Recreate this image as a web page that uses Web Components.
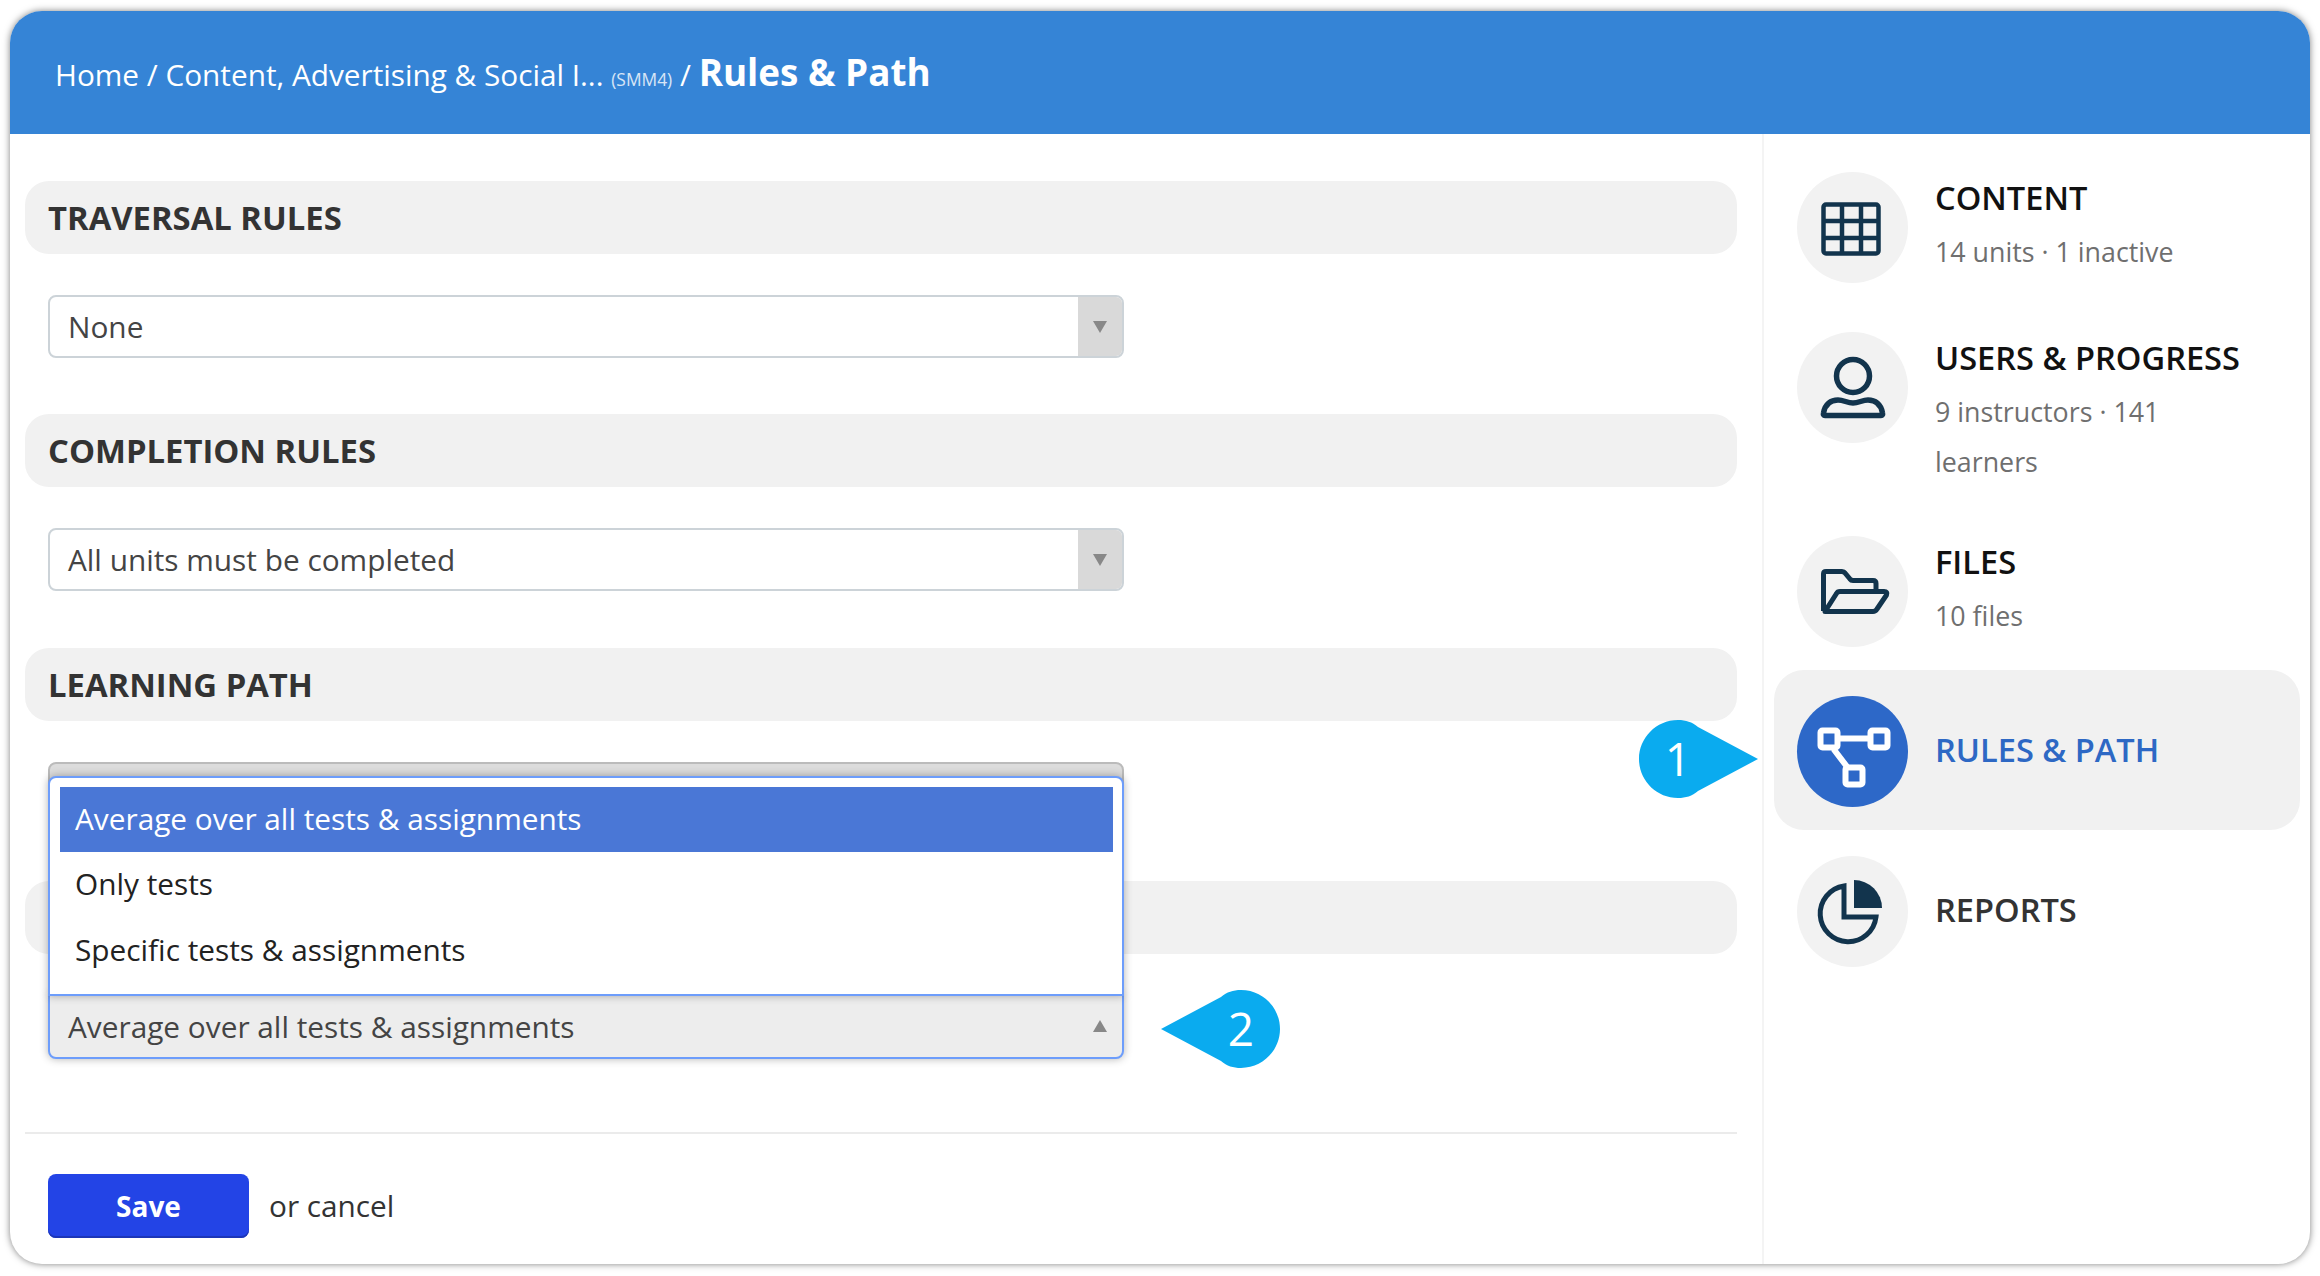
<!DOCTYPE html>
<html lang="en"><head><meta charset="utf-8"><title>Rules &amp; Path</title>
<style>
html,body{margin:0;padding:0;background:#fff;font-family:"Open Sans","Liberation Sans",sans-serif;color:#333}
</style></head><body>
<app-card>
  <app-header slot="header"><span>Home / Content, Advertising &amp; Social I...</span> <small>(SMM4)</small> <span>/</span> <b>Rules &amp; Path</b></app-header>
  <div slot="main">
    <form-section heading="Traversal rules"><select-box value="None"></select-box></form-section>
    <form-section heading="Completion rules"><select-box value="All units must be completed"></select-box></form-section>
    <form-section heading="Learning path"><select-box muted></select-box></form-section>
    <form-section last>
      <select-box open value="Average over all tests &amp; assignments">
        <option-row selected>Average over all tests &amp; assignments</option-row>
        <option-row>Only tests</option-row>
        <option-row>Specific tests &amp; assignments</option-row>
      </select-box>
      <call-out side="left" num="2"></call-out>
    </form-section>
    <form-actions></form-actions>
  </div>
  <div slot="side">
    <nav-item heading="Content" sub="14 units · 1 inactive">
      <svg viewBox="0 0 111 111" fill="none" stroke="currentColor" stroke-width="4.500"><rect x="26.500" y="32.500" width="55" height="49" rx="2.500"/><path d="M45 32v50M64 32v50M26 49h56M26 66h56"/></svg>
    </nav-item>
    <nav-item heading="Users &amp; Progress" sub="9 instructors · 141 learners">
      <svg viewBox="0 0 111 111" fill="none" stroke="currentColor" stroke-width="5.500"><circle cx="56" cy="44" r="16.500"/><path stroke-linejoin="round" d="M28 83.500H84Q86 83.500 85.500 81C84 72 78 68 71 68C65 68 62 71 56 71C50 71 47 68 41 68C34 68 28 72 26.500 81Q26 83.500 28 83.500Z"/></svg>
    </nav-item>
    <nav-item heading="Files" sub="10 files">
      <svg viewBox="0 0 111 111" fill="none" stroke="currentColor" stroke-width="5" stroke-linejoin="round"><path d="M26.500 75V38Q26.500 35.500 29 35.500H45Q47 35.500 48 37L53 43Q54 44.500 56 44.500H76Q79 44.500 79 47.500V54"/><path d="M28 75.500L39.500 57.500Q40.500 55.500 43 55.500H87Q91 55.500 89.500 59L80 73Q78.500 75.500 76 75.500Z"/></svg>
    </nav-item>
    <nav-item active heading="Rules &amp; Path">
      <svg viewBox="0 0 111 111" fill="none" stroke="currentColor" stroke-width="6"><rect x="23.500" y="34.500" width="17" height="17" rx="2"/><rect x="73.500" y="34.500" width="17" height="17" rx="2"/><rect x="48.500" y="71.500" width="17" height="17" rx="2"/><path d="M41 42.500H73M36.500 53L51 72"/></svg>
      <call-out slot="badge" side="right" num="1"></call-out>
    </nav-item>
    <nav-item heading="Reports">
      <svg viewBox="0 0 111 111" fill="none" stroke="currentColor" stroke-width="5"><path d="M47 30V61H79A28 28 0 1 1 47 30Z"/><path fill="currentColor" stroke="none" d="M57 24A28 28 0 0 1 85 52H57Z"/></svg>
    </nav-item>
  </div>
</app-card>
<script>
function def(name, css, html){
  customElements.define(name, class extends HTMLElement{
    constructor(){super();const r=this.attachShadow({mode:'open'});r.innerHTML='<style>'+css+'</style>'+(typeof html==='function'?html(this):html);}
  });
}
const esc=s=>(s||'').replace(/&/g,'&amp;').replace(/</g,'&lt;');
def('app-card',`
:host{display:flex;flex-direction:column;box-sizing:border-box;margin:11px 10px 12px;height:1253px;background:#fff;border-radius:32px;box-shadow:0 0 7px rgba(0,0,0,.5);overflow:hidden}
.body{flex:1;display:flex;min-height:0}
.main{flex:1;min-width:0;box-sizing:border-box;padding:47px 25px 0 15px}
.side{width:548px;box-sizing:border-box;border-left:2px solid #f4f4f4;padding:12px 10px 0 10px}
`,`<slot name="header"></slot><div class="body"><div class="main"><slot name="main"></slot></div><div class="side"><slot name="side"></slot></div></div>`);
def('app-header',`
:host{display:block;box-sizing:border-box;height:123px;padding:21px 45px 0;background:#3584d6;color:#fff;font-size:29.760px;line-height:80px;white-space:nowrap}
::slotted(small){font-size:17.400px;opacity:.8}
::slotted(b){font-size:36.800px;font-weight:700}
`,`<slot></slot>`);
def('form-section',`
:host{display:block;margin-bottom:56.300px}
:host([last]){margin-bottom:0}
.bar{box-sizing:border-box;height:73px;margin-bottom:41px;padding:0 23px;background:#f1f1f1;border-radius:24px;font-size:32.800px;font-weight:700;line-height:73px;color:#333;text-transform:uppercase}
:host([last]) .bar{margin-bottom:40px}
.row{position:relative;padding-left:23px}
`,el=>`<div class="bar">${esc(el.getAttribute('heading'))}</div><div class="row"><slot></slot></div>`);
def('select-box',`
:host{display:block;position:relative;box-sizing:border-box;width:1076px;height:63px;border:2px solid #ccd3d8;border-radius:8px;background:#fff;font-size:29.800px;line-height:59px;color:#444}
.v{display:block;padding-left:18px}
.a{position:absolute;right:0;top:0;bottom:0;width:44px;background:#d9d9d9;border-radius:0 6px 6px 0;display:flex;align-items:center;justify-content:center}
.a svg{width:14px;height:12px;fill:#888;display:block}
:host([muted]){background:#dcdcdc;border-color:#bbb}
:host([muted]) .a{display:none}
:host([open]){height:65px;line-height:61px;background:#ededed;border-color:#6d9dfb;box-shadow:0 0 8px rgba(0,0,0,.3);border-radius:0 0 8px 8px}
:host([open]) .a{background:none}
.list{display:none}
:host([open]) .list{display:block;position:absolute;left:-2px;right:-2px;bottom:100%;box-sizing:border-box;height:220px;padding:9px 9px 0 10px;background:#fff;border:2px solid #6d9dfb;border-radius:8px 8px 0 0;box-shadow:0 0 8px rgba(0,0,0,.3)}
`,el=>`<span class="v">${esc(el.getAttribute('value'))}</span><span class="a"><svg viewBox="0 0 14 12"><path d="${el.hasAttribute('open')?'M7 0L14 12H0Z':'M0 0H14L7 12Z'}"/></svg></span><div class="list"><slot></slot></div>`);
def('option-row',`
:host{display:block;height:65.600px;padding-left:15px;font-size:29.800px;line-height:63px;color:#222}
:host([selected]){background:#4a77d6;color:#fff}
`,`<slot></slot>`);
def('form-actions',`
:host{display:block;margin-top:73px;border-top:2px solid #ebebeb;padding:40px 0 0 23px}
.w{display:flex;align-items:center;gap:20px;font-size:29.760px;color:#333}
button{width:201px;height:64px;border:0;border-radius:8px;background:#2344e6;box-shadow:inset 0 -2px 0 #1c36b8;color:#fff;font:700 28px "Open Sans","Liberation Sans",sans-serif;padding:0}
`,`<div class="w"><button>Save</button><span>or cancel</span></div>`);
def('nav-item',`
:host{display:flex;position:relative;box-sizing:border-box;min-height:160px;padding:26px 50px 23px 23px;gap:27px;border-radius:30px;align-items:flex-start}
:host([active]){background:#f1f1f1}
.c{flex:none;width:111px;height:111px;border-radius:50%;background:#f2f2f2;color:#12344d;display:flex}
.c ::slotted(svg){width:111px;height:111px;display:block}
:host([active]) .c{background:#2d68c8;color:#fff}
.t{flex:1;min-width:0;padding-top:1px}
.t.one{align-self:center;padding:0 0 3px}
h3{margin:0;font-size:32.600px;font-weight:600;line-height:50px;color:#111;text-transform:uppercase;white-space:nowrap}
.t.one h3{color:#333}
:host([active]) h3{color:#2d68c4!important}
p{margin:3.500px 0 .5px;font-size:26.800px;line-height:50px;color:#6f6f6f}
`,el=>{const s=el.getAttribute('sub');return `<div class="c"><slot></slot></div><div class="t${s?'':' one'}"><h3>${esc(el.getAttribute('heading'))}</h3>${s?`<p>${esc(s)}</p>`:''}</div><slot name="badge"></slot>`});
def('call-out',`
:host{position:absolute;display:block;width:119px;height:78px}
:host([side=right]){left:-135px;top:50px}
:host([side=left]){left:1136px;top:-4px}
svg{position:absolute;inset:0;width:119px;height:78px;fill:#0aabef}
span{position:absolute;top:0;width:78px;height:78px;text-align:center;color:#fff;font-size:46px;line-height:76px;font-weight:400}
:host([side=right]) span{left:0}
:host([side=left]) span{right:0}
`,el=>{const r=el.getAttribute('side')==='right';return `<svg viewBox="0 0 119 78"><path d="${r?'M39 0C47 0 53 2 59 7L119 39L59 71C53 76 47 78 39 78C17 78 0 60 0 39C0 18 17 0 39 0Z':'M80 0C72 0 66 2 60 7L0 39L60 71C66 76 72 78 80 78C102 78 119 60 119 39C119 18 102 0 80 0Z'}"/></svg><span>${el.getAttribute('num')}</span>`});
</script>
</body></html>
